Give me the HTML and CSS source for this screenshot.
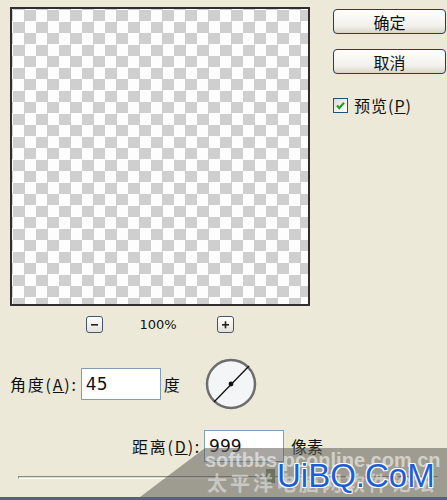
FILE: index.html
```html
<!DOCTYPE html>
<html lang="zh-CN">
<head>
    <meta charset="UTF-8">
    <title>投影</title>
    <link rel="stylesheet" href="styles.css">
</head>
<body>
    <div class="dialog">
        <div class="top">
            <div class="left-col">
                <div class="preview"></div>
                <div class="zoom-row">
                    <span class="zoom-btn">
                        <svg width="9" height="9" viewBox="0 0 9 9"><rect x="1" y="4" width="7" height="1.6" fill="#222"/></svg>
                    </span>
                    <span class="zoom-value">100%</span>
                    <span class="zoom-btn">
                        <svg width="9" height="9" viewBox="0 0 9 9"><rect x="1" y="4" width="7" height="1.6" fill="#222"/><rect x="3.7" y="1.3" width="1.6" height="7" fill="#222"/></svg>
                    </span>
                </div>
            </div>
            <div class="right-col">
                <button class="btn">确定</button>
                <button class="btn btn-second">取消</button>
                <label class="check-row">
                    <span class="checkbox">
                        <svg width="11" height="11" viewBox="0 0 11 11"><path d="M2 5.5 L4.3 8 L9 2.8" fill="none" stroke="#21a121" stroke-width="2.2"/></svg>
                    </span>
                    <span class="check-text">预览(<u>P</u>)</span>
                </label>
            </div>
        </div>

        <div class="angle-row">
            <span class="label">角度(<u>A</u>):</span>
            <div class="field">45</div>
            <span class="unit">度</span>
            <div class="dial">
                <svg width="52" height="52" viewBox="0 0 52 52">
                    <circle cx="26" cy="26" r="24" fill="#f4f5f7" stroke="#6d6d6d" stroke-width="2.5"/>
                    <line x1="9" y1="44" x2="44" y2="8" stroke="#111" stroke-width="1.3"/>
                    <circle cx="26" cy="26" r="2.4" fill="#111"/>
                </svg>
            </div>
        </div>

        <div class="distance-row">
            <span class="label">距离(<u>D</u>):</span>
            <div class="field">999</div>
            <span class="unit">像素</span>
        </div>

        <div class="slider">
            <div class="track"></div>
            <div class="thumb"></div>
        </div>

        <div class="bottom-bar"></div>

        <div class="watermark">
            <div class="wm-site">softbbs.pconline.com.cn</div>
            <div class="wm-logo">UiBQ.CoM</div>
            <div class="wm-cn">太平洋电脑网软件论坛</div>
        </div>
    </div>
</body>
</html>
```

FILE: styles.css
```css
body {
    margin: 0;
    background-color: #ece9d8;
    font-family: "Noto Sans CJK SC", "DejaVu Sans", sans-serif;
    color: #111;
}
.dialog {
    position: relative;
    width: 447px;
    height: 500px;
    overflow: hidden;
    display: flex;
    flex-direction: column;
}
.top {
    display: flex;
    padding: 7px 0 0 10px;
}
.preview {
    width: 300px;
    height: 299px;
    box-sizing: border-box;
    border: 2px solid #2e2e2e;
    background: repeating-conic-gradient(#cfcfcf 0 25%, #fdfdfd 0 50%) 1px 1px / 23px 23px;
}
.zoom-row {
    display: flex;
    align-items: center;
    margin-top: 10px;
    padding-left: 76px;
    height: 17px;
}
.zoom-btn {
    width: 15px;
    height: 15px;
    border: 1px solid #46556f;
    border-radius: 3px;
    background: linear-gradient(#ffffff, #e4e2dc);
    display: flex;
    align-items: center;
    justify-content: center;
}
.zoom-value {
    font-family: "DejaVu Sans", sans-serif;
    font-size: 13px;
    width: 40px;
    margin: 0 39px 0 35px;
    text-align: center;
}
.right-col {
    margin-left: 23px;
    display: flex;
    flex-direction: column;
}
.btn {
    width: 113px;
    height: 25px;
    margin-top: 2px;
    padding: 0;
    border: 1px solid #1b3f73;
    border-radius: 4px;
    background: linear-gradient(#ffffff, #f1f0ea 70%, #d9d5c8);
    font-family: "Noto Sans CJK SC", sans-serif;
    font-size: 16px;
    line-height: 22px;
    color: #111;
}
.btn-second {
    margin-top: 15px;
}
.check-row {
    display: flex;
    align-items: center;
    gap: 6px;
    margin-top: 22px;
    font-size: 16px;
    line-height: 18px;
}
.check-text {
    letter-spacing: 1px;
}
.checkbox {
    width: 13px;
    height: 13px;
    border: 1px solid #1c5180;
    background: linear-gradient(135deg, #dcdcd5, #ffffff);
    display: flex;
    align-items: center;
    justify-content: center;
}
.angle-row {
    display: flex;
    align-items: center;
    margin-top: 25px;
    padding-left: 10px;
}
.label {
    font-size: 16px;
    letter-spacing: 1.8px;
}
.field {
    width: 80px;
    height: 32px;
    box-sizing: border-box;
    border: 1px solid #7f9db9;
    background-color: #fff;
    margin-left: 3px;
    padding-left: 4px;
    font-family: "DejaVu Sans", sans-serif;
    font-size: 17px;
    line-height: 30px;
}
.unit {
    font-size: 16px;
    margin-left: 3px;
}
.dial {
    margin-left: 25px;
    height: 52px;
}
.distance-row {
    display: flex;
    align-items: center;
    margin-top: 20px;
    padding-left: 132px;
}
.distance-row .unit {
    margin-left: 7px;
}
.slider {
    position: relative;
    margin: 13px 0 0 18px;
    width: 420px;
    height: 6px;
}
.track {
    margin-top: 1px;
    height: 1px;
    border-top: 1px solid #8e8b7e;
    border-bottom: 1px solid #ffffff;
    border-left: 1px solid #8e8b7e;
    background-color: #dedbcd;
}
.thumb {
    position: absolute;
    left: 248px;
    top: -6px;
    width: 9px;
    height: 14px;
    background-color: #7f8a72;
}
.bottom-bar {
    margin-top: auto;
    height: 3px;
    background-color: #56627c;
}
.watermark {
    position: absolute;
    left: 140px;
    top: 448px;
    width: 307px;
    height: 49px;
    background-color: rgba(95, 93, 88, 0.55);
    clip-path: polygon(65px 0, 100% 0, 100% 100%, 0 100%);
}
.wm-site {
    position: absolute;
    left: 65px;
    top: 2px;
    font-family: "Liberation Sans", sans-serif;
    font-weight: bold;
    font-size: 20px;
    line-height: 20px;
    white-space: nowrap;
    color: rgba(255, 255, 255, 0.55);
}
.wm-cn {
    position: absolute;
    left: 67px;
    top: 25px;
    font-size: 20px;
    line-height: 20px;
    letter-spacing: 3px;
    font-weight: bold;
    white-space: nowrap;
    color: rgba(255, 255, 255, 0.45);
}
.wm-logo {
    position: absolute;
    left: 137px;
    top: 11px;
    z-index: 1;
    font-family: "Liberation Sans", sans-serif;
    font-size: 33px;
    line-height: 33px;
    color: #1d5ed8;
    text-shadow: 1px 1px 0 #fff, -1px -1px 0 #fff, 1px -1px 0 #fff, -1px 1px 0 #fff;
}
```
